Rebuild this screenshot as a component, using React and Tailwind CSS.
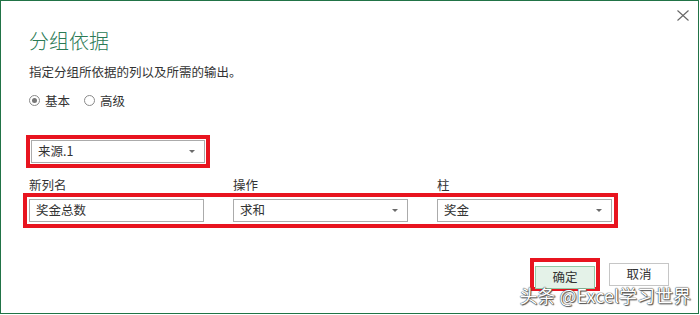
import React from 'react';

const font = { fontFamily: '"Noto Sans CJK SC", "Noto Sans", sans-serif' };

const Arrow = () => (
  <svg width="6" height="3" viewBox="0 0 6 3" className="shrink-0">
    <path d="M0 0h6L3 3z" fill="#6b6b6b" />
  </svg>
);

const SelectBox = ({ value, className = '' }) => (
  <div className={`h-[23px] border border-[#ababab] bg-white flex items-center justify-between pl-[6px] pr-[9px] ${className}`}>
    <span className="text-[12.5px] leading-none text-[#333]">{value}</span>
    <Arrow />
  </div>
);

const Radio = ({ label, checked }) => (
  <label className="flex items-center gap-[5px]">
    <span className="w-[11px] h-[11px] rounded-full border border-[#8a8a8a] bg-white flex items-center justify-center">
      {checked && <span className="w-[5px] h-[5px] rounded-full bg-[#777]" />}
    </span>
    <span className="text-[12.5px] leading-[17px] text-[#333]">{label}</span>
  </label>
);

const GroupByDialog = () => {
  return (
    <div className="w-[699px] h-[314px] border border-[#217346] bg-white relative" style={font}>
      <button className="absolute top-[8px] right-[9px] w-[13px] h-[12px] flex items-center justify-center">
        <svg width="12" height="11" viewBox="0 0 12 11">
          <path d="M0.5 0.5L11.5 10.5M11.5 0.5L0.5 10.5" stroke="#666" strokeWidth="1.1" fill="none" />
        </svg>
      </button>

      <div className="pl-[28px] pt-[26px]">
        <h2 className="text-[20px] leading-[28px] text-[#2a7a55] font-light">分组依据</h2>
        <p className="mt-[8px] text-[12.5px] leading-[17px] text-[#333]">指定分组所依据的列以及所需的输出。</p>

        <div className="mt-[12px] flex items-center gap-[14px]">
          <Radio label="基本" checked />
          <Radio label="高级" />
        </div>

        {/* grouping column */}
        <div className="mt-[26px] ml-[-3px] w-[184px] h-[33px] border-4 border-[#e8141f] p-px">
          <SelectBox value="来源.1" />
        </div>

        <div className="mt-[8px] flex gap-[29px] text-[12.5px] leading-[17px] text-[#333]">
          <span className="w-[175px]">新列名</span>
          <span className="w-[175px]">操作</span>
          <span className="w-[175px]">柱</span>
        </div>

        {/* aggregation row */}
        <div className="ml-[-6px] w-[595px] h-[35px] border-4 border-[#e8141f] p-[2px] flex gap-[29px]">
          <div className="w-[175px] h-[23px] border border-[#ababab] bg-white flex items-center pl-[6px]">
            <span className="text-[12.5px] leading-none text-[#333]">奖金总数</span>
          </div>
          <SelectBox value="求和" className="w-[175px]" />
          <SelectBox value="奖金" className="w-[175px]" />
        </div>
      </div>

      <div className="mt-[30px] flex justify-end items-center gap-[9px] pr-[29px]">
        <div className="w-[70px] h-[33px] border-4 border-[#e8141f] p-px">
          <button className="w-full h-full border border-[#92c9a5] bg-[#e4f2e8] text-[12.5px] leading-none text-[#333]">确定</button>
        </div>
        <button className="w-[60px] h-[23px] border border-[#c6c6c6] bg-white text-[12.5px] leading-none text-[#333]">取消</button>
      </div>

      <div className="absolute right-[7px] bottom-[9px] text-[18px] leading-[18px] text-white [text-shadow:0_0_1px_#333,0_0_1px_#333,1px_1px_1px_#555]">
        头条 @Excel学习世界
      </div>
    </div>
  );
};

export default function App() {
  return <GroupByDialog />;
}
